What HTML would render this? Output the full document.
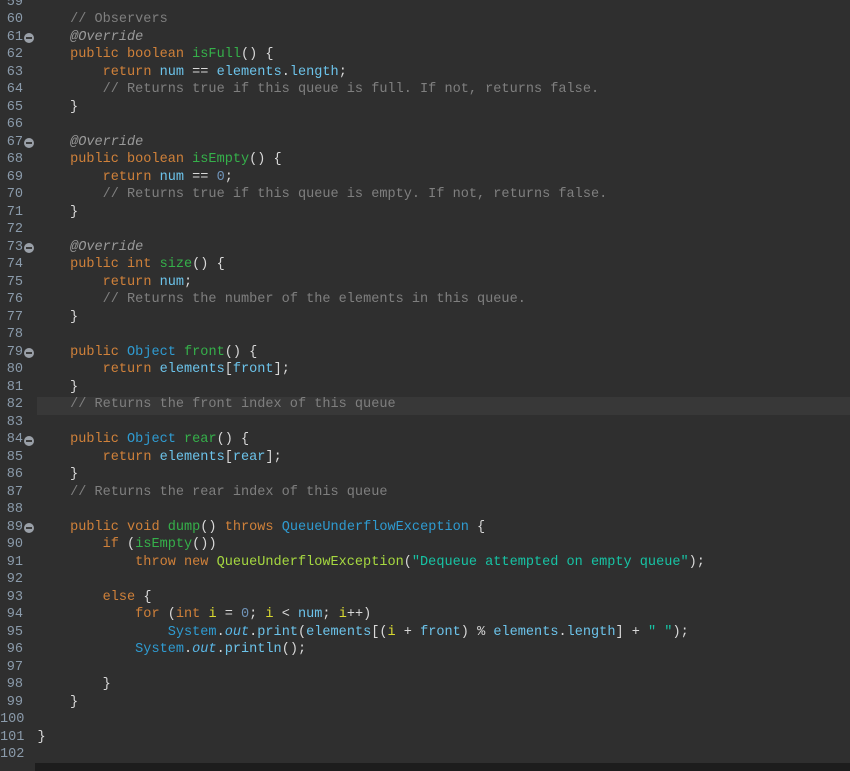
<!DOCTYPE html>
<html><head><meta charset="utf-8"><style>
html,body{margin:0;padding:0;background:#2f2f2f;width:850px;height:771px;overflow:hidden}
body{position:relative;font-family:"Liberation Mono",monospace;font-size:13.57px;}
.ln{position:absolute;left:0;width:23px;text-align:right;color:#8b9bab;line-height:17.5px;}
.code{position:absolute;left:37.5px;color:#d9d9d9;line-height:17.5px;}
.row{height:17.5px;}
.code .row{white-space:pre;}
.hl{position:absolute;left:37px;right:0;top:397px;height:17.5px;background:#383838}
.k{color:#d0813a}.m{color:#35b04a}.f{color:#6cc3ea}.c{color:#7f7f7f}.a{color:#9a9a9a;font-style:italic}
.t{color:#2f9bd1}.s{color:#17c3a4}.v{color:#d8d830}.n{color:#6f93b8}.g{color:#a6d840}.o{color:#5ab8e8;font-style:italic}
.fold{position:absolute;left:24px;width:10px;height:10px;border-radius:50%;background:#9aa0a8}
.fold::after{content:"";position:absolute;left:2px;top:4px;width:6px;height:2px;background:#3a3a3a}
.bot{position:absolute;left:35px;right:0;top:763px;height:8px;background:#1d1d1d}
</style></head><body>
<div class="hl"></div>
<div class="ln" style="top:-6.5px">
<div class="row">59</div><div class="row">60</div><div class="row">61</div><div class="row">62</div><div class="row">63</div><div class="row">64</div><div class="row">65</div><div class="row">66</div><div class="row">67</div><div class="row">68</div><div class="row">69</div><div class="row">70</div><div class="row">71</div><div class="row">72</div><div class="row">73</div><div class="row">74</div><div class="row">75</div><div class="row">76</div><div class="row">77</div><div class="row">78</div><div class="row">79</div><div class="row">80</div><div class="row">81</div><div class="row">82</div><div class="row">83</div><div class="row">84</div><div class="row">85</div><div class="row">86</div><div class="row">87</div><div class="row">88</div><div class="row">89</div><div class="row">90</div><div class="row">91</div><div class="row">92</div><div class="row">93</div><div class="row">94</div><div class="row">95</div><div class="row">96</div><div class="row">97</div><div class="row">98</div><div class="row">99</div><div class="row">100</div><div class="row">101</div><div class="row">102</div>
</div>
<div class="fold" style="top:33px"></div>
<div class="fold" style="top:138px"></div>
<div class="fold" style="top:243px"></div>
<div class="fold" style="top:348px"></div>
<div class="fold" style="top:435.5px"></div>
<div class="fold" style="top:523px"></div>
<div class="code" style="top:-6.5px"><div class="row"> </div><div class="row">    <span class="c">// Observers</span></div><div class="row">    <span class="a">@Override</span></div><div class="row">    <span class="k">public boolean</span> <span class="m">isFull</span>() {</div><div class="row">        <span class="k">return</span> <span class="f">num</span> == <span class="f">elements</span>.<span class="f">length</span>;</div><div class="row">        <span class="c">// Returns true if this queue is full. If not, returns false.</span></div><div class="row">    }</div><div class="row"> </div><div class="row">    <span class="a">@Override</span></div><div class="row">    <span class="k">public boolean</span> <span class="m">isEmpty</span>() {</div><div class="row">        <span class="k">return</span> <span class="f">num</span> == <span class="n">0</span>;</div><div class="row">        <span class="c">// Returns true if this queue is empty. If not, returns false.</span></div><div class="row">    }</div><div class="row"> </div><div class="row">    <span class="a">@Override</span></div><div class="row">    <span class="k">public int</span> <span class="m">size</span>() {</div><div class="row">        <span class="k">return</span> <span class="f">num</span>;</div><div class="row">        <span class="c">// Returns the number of the elements in this queue.</span></div><div class="row">    }</div><div class="row"> </div><div class="row">    <span class="k">public</span> <span class="t">Object</span> <span class="m">front</span>() {</div><div class="row">        <span class="k">return</span> <span class="f">elements</span>[<span class="f">front</span>];</div><div class="row">    }</div><div class="row">    <span class="c">// Returns the front index of this queue</span></div><div class="row"> </div><div class="row">    <span class="k">public</span> <span class="t">Object</span> <span class="m">rear</span>() {</div><div class="row">        <span class="k">return</span> <span class="f">elements</span>[<span class="f">rear</span>];</div><div class="row">    }</div><div class="row">    <span class="c">// Returns the rear index of this queue</span></div><div class="row"> </div><div class="row">    <span class="k">public void</span> <span class="m">dump</span>() <span class="k">throws</span> <span class="t">QueueUnderflowException</span> {</div><div class="row">        <span class="k">if</span> (<span class="m">isEmpty</span>())</div><div class="row">            <span class="k">throw new</span> <span class="g">QueueUnderflowException</span>(<span class="s">"Dequeue attempted on empty queue"</span>);</div><div class="row"> </div><div class="row">        <span class="k">else</span> {</div><div class="row">            <span class="k">for</span> (<span class="k">int</span> <span class="v">i</span> = <span class="n">0</span>; <span class="v">i</span> &lt; <span class="f">num</span>; <span class="v">i</span>++)</div><div class="row">                <span class="t">System</span>.<span class="o">out</span>.<span class="f">print</span>(<span class="f">elements</span>[(<span class="v">i</span> + <span class="f">front</span>) % <span class="f">elements</span>.<span class="f">length</span>] + <span class="s">" "</span>);</div><div class="row">            <span class="t">System</span>.<span class="o">out</span>.<span class="f">println</span>();</div><div class="row"> </div><div class="row">        }</div><div class="row">    }</div><div class="row"> </div><div class="row">}</div><div class="row"> </div></div>
<div class="bot"></div>
</body></html>
